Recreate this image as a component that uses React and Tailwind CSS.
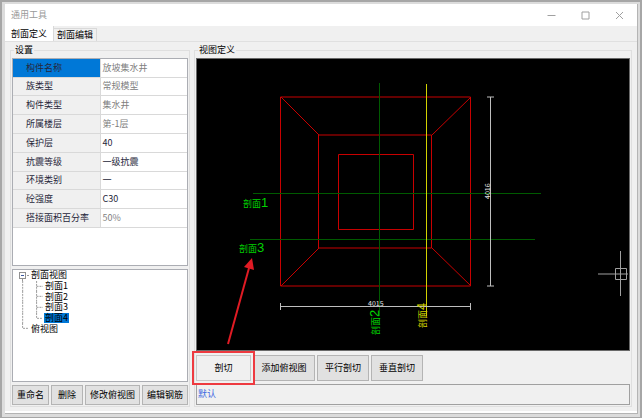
import { useState } from 'react';

const PROPERTIES = [
  { name: '构件名称', value: '放坡集水井', readOnly: true },
  { name: '族类型', value: '常规模型', readOnly: true },
  { name: '构件类型', value: '集水井', readOnly: true },
  { name: '所属楼层', value: '第-1层', readOnly: true },
  { name: '保护层', value: '40' },
  { name: '抗震等级', value: '一级抗震' },
  { name: '环境类别', value: '一' },
  { name: '砼强度', value: 'C30' },
  { name: '搭接面积百分率', value: '50%', readOnly: true },
];

const SECTIONS = ['剖面1', '剖面2', '剖面3', '剖面4'];

function TitleBar() {
  return (
    <header className="flex h-[22px] items-center justify-between bg-white pl-[6px] pr-[13px] text-[#999999]">
      <h1>通用工具</h1>
      <div className="flex gap-[25px]">
        <button type="button" aria-label="最小化">
          <svg width="9" height="9" viewBox="0 0 9 9" fill="none" stroke="#a0a0a0">
            <path d="M0.5 4.5H8.5" />
          </svg>
        </button>
        <button type="button" aria-label="最大化">
          <svg width="9" height="9" viewBox="0 0 9 9" fill="none" stroke="#a0a0a0">
            <path d="M1 1H8V8H1Z" />
          </svg>
        </button>
        <button type="button" aria-label="关闭">
          <svg width="9" height="9" viewBox="0 0 9 9" fill="none" stroke="#a0a0a0">
            <path d="M1 1L8 8M8 1L1 8" />
          </svg>
        </button>
      </div>
    </header>
  );
}

function PushButton({ children, className }) {
  return (
    <button
      type="button"
      className={`border text-center whitespace-nowrap hover:bg-[#e5f1fb] ${className}`}
    >
      {children}
    </button>
  );
}

function GroupBox({ title, className, children }) {
  return (
    <fieldset className={`min-w-0 border border-[#dfdfdf] px-[1px] pt-[2px] pb-[1px] ${className}`}>
      <legend className="ml-[2px] h-[12px] px-[1px] leading-[12px]">{title}</legend>
      {children}
    </fieldset>
  );
}

function PropertyGrid() {
  const [selected, setSelected] = useState(0);

  return (
    <div className="h-[208px] border border-[#abadb3] bg-white">
      <table className="h-[169px] w-full table-fixed border-collapse">
        <tbody>
          {PROPERTIES.map((row, idx) => (
            <tr key={row.name} onClick={() => setSelected(idx)} className="border-b border-[#d9d9d9]">
              <th
                scope="row"
                className={`border-r border-[#d9d9d9] p-0 pl-[13px] text-left font-normal whitespace-nowrap text-[#26263a] ${
                  selected === idx ? 'bg-[#0078d7]' : 'bg-[#f0f0f0]'
                }`}
              >
                {row.name}
              </th>
              <td className={`p-0 pl-[2px] ${row.readOnly ? 'text-[#808080]' : 'text-[#26263a]'}`}>
                {row.value}
              </td>
            </tr>
          ))}
        </tbody>
      </table>
    </div>
  );
}

function TreeBranch({ last }) {
  return (
    <svg className="h-full w-[9px] shrink-0" viewBox="0 0 9 11" fill="none" stroke="#999999" strokeDasharray="2 1">
      <path d={last ? 'M1.5 0V5.5H8' : 'M1.5 0V11M1.5 5.5H8'} />
    </svg>
  );
}

function TreeLine() {
  return (
    <svg className="h-full w-[14px] shrink-0" viewBox="0 0 14 11" fill="none" stroke="#999999" strokeDasharray="2 1">
      <path d="M1.5 0V11" />
    </svg>
  );
}

function ViewTree() {
  const [selected, setSelected] = useState('剖面4');

  return (
    <div className="mt-[3px] flex-1 border border-[#abadb3] bg-white pl-[6px]">
      <ul className="grid h-[64px] grid-rows-6">
        <li className="flex items-center">
          <svg width="12" height="11" viewBox="0 0 12 11" fill="none">
            <rect x="0.5" y="2.5" width="6" height="6" fill="#ffffff" stroke="#919191" />
            <path d="M2 5.5H5" stroke="#3c5aa0" />
            <path d="M8 5.5H10M3.5 9V11" stroke="#999999" />
          </svg>
          剖面视图
        </li>
        {SECTIONS.map((name, idx) => (
          <li key={name} className="flex items-center pl-[2px]">
            <TreeLine />
            <TreeBranch last={idx === SECTIONS.length - 1} />
            <button
              type="button"
              onClick={() => setSelected(name)}
              className={`h-full px-[1px] leading-[10px] ${selected === name ? 'bg-[#0078d7]' : ''}`}
            >
              {name}
            </button>
          </li>
        ))}
        <li className="flex items-center gap-[1px] pl-[2px]">
          <TreeBranch last />
          俯视图
        </li>
      </ul>
    </div>
  );
}

function SectionCanvas() {
  return (
    <div className="flex-1 border border-[#696969] bg-black">
      <svg
        className="block w-full"
        viewBox="197 59 432 291"
        preserveAspectRatio="xMinYMin meet"
        fill="none"
        fontSize="9"
      >
        {/* pit outline */}
        <g stroke="#c80000">
          <path d="M280.5 97H470.5V286H280.5Z" />
          <path d="M318.5 135H431.5V248H318.5Z" />
          <path d="M338.5 154.5H413.5V229.5H338.5Z" />
          <path d="M281 97L319 135M471 97L432 135M281 286L319 248M471 286L432 248" />
        </g>

        {/* section lines */}
        <path d="M379.5 83V316M253 193.5H541M250 239.5H535" stroke="#005a00" />
        <path d="M426.5 84V316" stroke="#d2d200" />

        {/* dimensions */}
        <g stroke="#bebebe">
          <path d="M281 306.5H470M280.5 303V310M470.5 303V310" />
          <path d="M490.5 97V286M487 97H494M487 286H494" />
        </g>
        <g fill="#e6e6e6" fontSize="7">
          <text x="368" y="306">4015</text>
          <text transform="translate(490 199) rotate(-90)">4016</text>
        </g>

        <g fill="#00d200">
          <text x="243" y="207">
            剖面<tspan className="font-['Liberation_Sans',sans-serif] text-[13px]">1</tspan>
          </text>
          <text x="239" y="252">
            剖面<tspan className="font-['Liberation_Sans',sans-serif] text-[13px]">3</tspan>
          </text>
          <text transform="translate(379 335) rotate(-90)">
            剖面<tspan className="font-['Liberation_Sans',sans-serif] text-[13px]">2</tspan>
          </text>
        </g>
        <text transform="translate(426 328) rotate(-90)" fill="#d2d200">
          剖面<tspan className="font-['Liberation_Sans',sans-serif] text-[13px]">4</tspan>
        </text>

        {/* cursor */}
        <path d="M598 274H628M620.5 251V296M615.5 268.5H626.5V279.5H615.5Z" stroke="#a0a0a0" />

        {/* pointer to the section label */}
        <path d="M228 344L249 268" stroke="#e01b24" strokeWidth="2" />
        <path d="M252 258L244 267L254 270Z" fill="#e01b24" />
      </svg>
    </div>
  );
}

export default function App() {
  const [tab, setTab] = useState('剖面定义');

  return (
    <div className="flex min-h-screen border-2 border-b-3 border-[#a6a6a6] bg-[#dcdcdc] pt-[2px] pr-[2px] pb-[3px] pl-[3px] font-['Noto_Sans_CJK_SC',sans-serif] text-[9px] leading-[12px] text-black">
      <div className="flex flex-1 flex-col border-r border-b border-[#b4b4b4] bg-[#f0f0f0]">
        <TitleBar />

        <nav className="flex h-[15px] items-end" role="tablist">
          {['剖面定义', '剖面编辑'].map((name) => (
            <button
              key={name}
              type="button"
              role="tab"
              aria-selected={tab === name}
              onClick={() => setTab(name)}
              className={`border-r border-[#d9d9d9] whitespace-nowrap ${
                tab === name ? 'h-[15px] bg-white px-[6px]' : 'h-[13px] border-t bg-[#f0f0f0] px-[3px]'
              }`}
            >
              {name}
            </button>
          ))}
        </nav>

        <main className="flex flex-1 gap-[4px] border-t border-b-2 border-t-[#e0e0e0] border-b-white pt-[2px] pr-[5px] pb-[4px] pl-[5px]">
          <GroupBox title="设置" className="w-[180px] shrink-0">
            <div className="flex h-full flex-col">
              <PropertyGrid />
              <ViewTree />
              <div className="mt-[3px] flex gap-[2px]">
                <PushButton className="h-[20px] w-[37px] border-[#b4b4b4] bg-[#e1e1e1]">重命名</PushButton>
                <PushButton className="h-[20px] w-[32px] border-[#b4b4b4] bg-[#e1e1e1]">删除</PushButton>
                <PushButton className="h-[20px] flex-1 border-[#b4b4b4] bg-[#e1e1e1]">修改俯视图</PushButton>
                <PushButton className="h-[20px] w-[46px] border-[#b4b4b4] bg-[#e1e1e1]">编辑钢筋</PushButton>
              </div>
            </div>
          </GroupBox>

          <GroupBox title="视图定义" className="flex-1">
            <div className="flex h-full flex-col">
              <SectionCanvas />
              <div className="mt-[4px] flex gap-[2px]">
                <div className="relative">
                  <PushButton className="block h-[26px] w-[55px] border-[#c8c8c8] bg-[#f0f0f0]">剖切</PushButton>
                  <span className="pointer-events-none absolute -inset-x-[4px] -inset-y-[4px] border-2 border-[#ee3a40]" />
                </div>
                <PushButton className="h-[26px] w-[62px] border-[#b4b4b4] bg-[#e1e1e1]">添加俯视图</PushButton>
                <PushButton className="h-[26px] w-[52px] border-[#b4b4b4] bg-[#e1e1e1]">平行剖切</PushButton>
                <PushButton className="h-[26px] w-[52px] border-[#b4b4b4] bg-[#e1e1e1]">垂直剖切</PushButton>
              </div>
              <output className="mt-[3px] block h-[21px] border border-[#a0a0a0] pt-[3px] pl-[1px] text-[#4169e1]">
                默认
              </output>
            </div>
          </GroupBox>
        </main>
      </div>
    </div>
  );
}
